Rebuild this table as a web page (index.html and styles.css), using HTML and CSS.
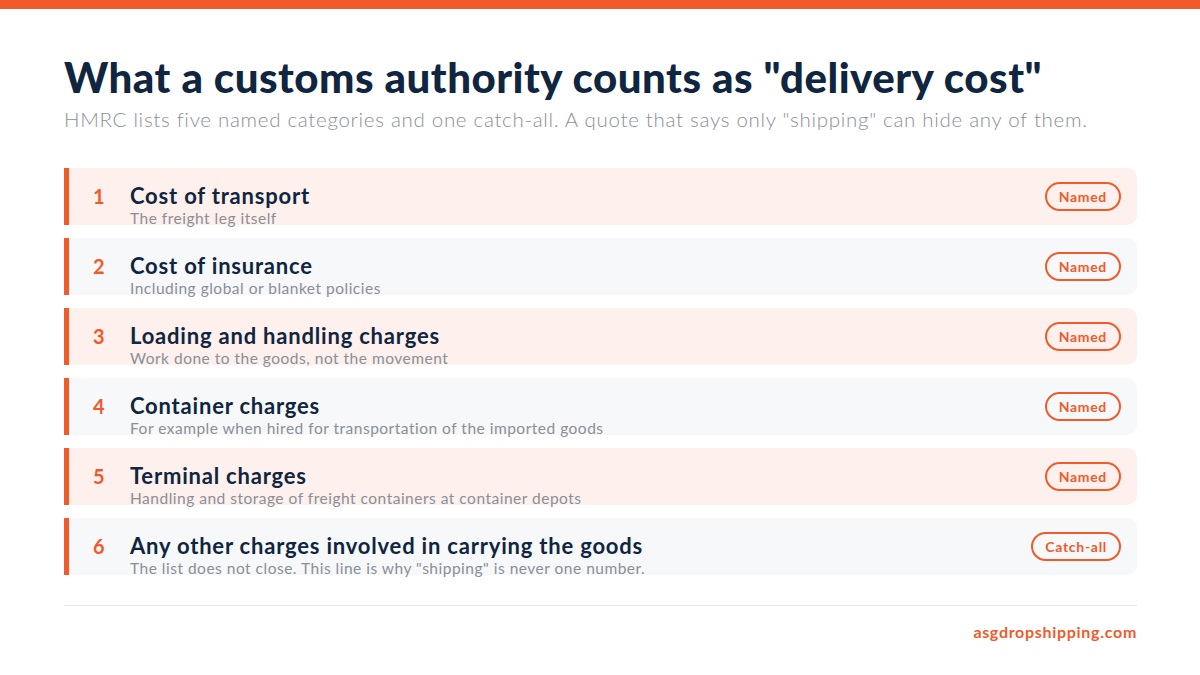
FILE: index.html
```html
<!DOCTYPE html>
<html lang="en">
<head>
<meta charset="utf-8">
<link rel="stylesheet" href="styles.css">
</head>
<body>
<div class="topbar"></div>
<main class="page">
  <h1 class="title">What a customs authority counts as "delivery cost"</h1>
  <p class="subtitle">HMRC lists five named categories and one catch-all. A quote that says only "shipping" can hide any of them.</p>
  <ul class="list">
    <li class="row pink">
      <div class="lead"><span class="num">1</span>
      <div class="text"><div class="head">Cost of transport</div><div class="desc">The freight leg itself</div></div></div>
      <span class="badge">Named</span>
    </li>
    <li class="row gray">
      <div class="lead"><span class="num">2</span>
      <div class="text"><div class="head">Cost of insurance</div><div class="desc">Including global or blanket policies</div></div></div>
      <span class="badge">Named</span>
    </li>
    <li class="row pink">
      <div class="lead"><span class="num">3</span>
      <div class="text"><div class="head">Loading and handling charges</div><div class="desc">Work done to the goods, not the movement</div></div></div>
      <span class="badge">Named</span>
    </li>
    <li class="row gray">
      <div class="lead"><span class="num">4</span>
      <div class="text"><div class="head">Container charges</div><div class="desc">For example when hired for transportation of the imported goods</div></div></div>
      <span class="badge">Named</span>
    </li>
    <li class="row pink">
      <div class="lead"><span class="num">5</span>
      <div class="text"><div class="head">Terminal charges</div><div class="desc">Handling and storage of freight containers at container depots</div></div></div>
      <span class="badge">Named</span>
    </li>
    <li class="row gray">
      <div class="lead"><span class="num">6</span>
      <div class="text"><div class="head">Any other charges involved in carrying the goods</div><div class="desc">The list does not close. This line is why "shipping" is never one number.</div></div></div>
      <span class="badge">Catch-all</span>
    </li>
  </ul>
  <footer class="footer">
    <span class="site">asgdropshipping.com</span>
  </footer>
</main>
</body>
</html>
```
FILE: styles.css
```css
* { box-sizing: border-box; }
html, body { margin: 0; padding: 0; }
body {
  width: 1200px;
  height: 675px;
  background: #ffffff;
  font-family: Lato, "Noto Sans", "Liberation Sans", sans-serif;
  color: #0f2540;
  overflow: hidden;
}
.topbar {
  height: 9px;
  background: #f15a2b;
}
.page {
  padding: 44px 63px 0 64px;
}
.title {
  margin: 0;
  font-size: 42px;
  line-height: 48px;
  font-weight: 900;
  color: #0f2540;
  letter-spacing: 0.5px;
  white-space: nowrap;
}
.subtitle {
  margin: 5px 0 0;
  font-size: 20.5px;
  line-height: 26px;
  font-weight: 300;
  color: #8a8f98;
  letter-spacing: 0.7px;
  white-space: nowrap;
}
.list {
  list-style: none;
  margin: 36px 0 0;
  padding: 0;
  display: flex;
  flex-direction: column;
  gap: 13px;
}
.row {
  height: 57px;
  display: flex;
  align-items: center;
  border-left: 5px solid #f15a2b;
  border-radius: 0 10px 10px 0;
  padding: 0 16px 0 24px;
}
.row.pink { background: #fef0ec; }
.row.gray { background: #f6f8fa; }
.lead {
  flex: 1;
  align-self: flex-start;
  padding-top: 15.5px;
  display: flex;
  align-items: baseline;
}
.num {
  width: 37px;
  font-size: 20px;
  font-weight: 700;
  color: #f15a2b;
}
.text {
  display: flex;
  flex-direction: column;
}
.head {
  font-size: 22px;
  line-height: 22px;
  font-weight: 700;
  color: #0f2540;
  letter-spacing: 0.8px;
  white-space: nowrap;
}
.desc {
  font-size: 15.5px;
  line-height: 17px;
  margin-top: 3px;
  color: #8b8f96;
  letter-spacing: 0.5px;
  white-space: nowrap;
}
.badge {
  height: 29px;
  padding: 0 12px;
  border: 2px solid #f15a2b;
  border-radius: 15px;
  font-size: 14px;
  font-weight: 700;
  color: #f15a2b;
  letter-spacing: 0.7px;
  display: flex;
  align-items: center;
}
.footer {
  margin-top: 30px;
  border-top: 1px solid #e6e8eb;
  padding-top: 16px;
  display: flex;
  justify-content: flex-end;
}
.site {
  font-size: 16px;
  font-weight: 700;
  color: #f15a2b;
  letter-spacing: 0.7px;
}
```
